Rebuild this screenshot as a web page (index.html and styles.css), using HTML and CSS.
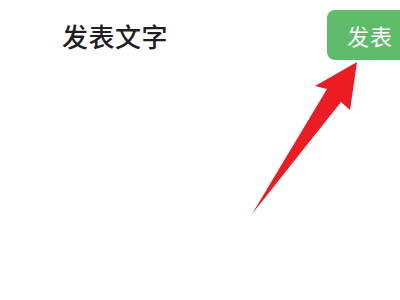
FILE: index.html
```html
<!DOCTYPE html>
<html lang="zh">
  <head>
    <meta charset="UTF-8" />
    <meta name="viewport" content="width=device-width, initial-scale=1.0" />
    <title>发表文字</title>
    <link rel="stylesheet" href="styles.css">
  </head>
  <body>
    <div class="header">
      <h1 class="title">发表文字</h1>
      <button class="publish">发表</button>
    </div>
    <!-- annotation arrow pointing at the button -->
    <svg class="arrow" width="400" height="300" viewBox="0 0 400 300">
      <polygon points="357,62 350,110 341,102 252,214 327,89 315,86" fill="#ec1c24" />
    </svg>
  </body>
</html>
```

FILE: styles.css
```css
body {
    margin: 0;
    width: 400px;
    height: 300px;
    overflow: hidden;
    background-color: #ffffff;
    font-family: "Noto Sans CJK SC", "Noto Sans", sans-serif;
    position: relative;
}

.header {
    display: flex;
    align-items: center;
    padding: 10px 0 0 62px;
}

.title {
    margin: 0;
    font-size: 26px;
    font-weight: 500;
    color: #1f1f1f;
    letter-spacing: 0.5px;
}

.publish {
    margin-left: auto;
    margin-right: -14px;
    width: 87px;
    height: 50px;
    border: none;
    border-radius: 8px;
    background-color: #5dbb6a;
    color: #ffffff;
    font-family: inherit;
    font-size: 22px;
    text-align: left;
    padding: 0 0 0 20px;
    letter-spacing: 1px;
}

.arrow {
    position: absolute;
    top: 0;
    left: 0;
}
```
